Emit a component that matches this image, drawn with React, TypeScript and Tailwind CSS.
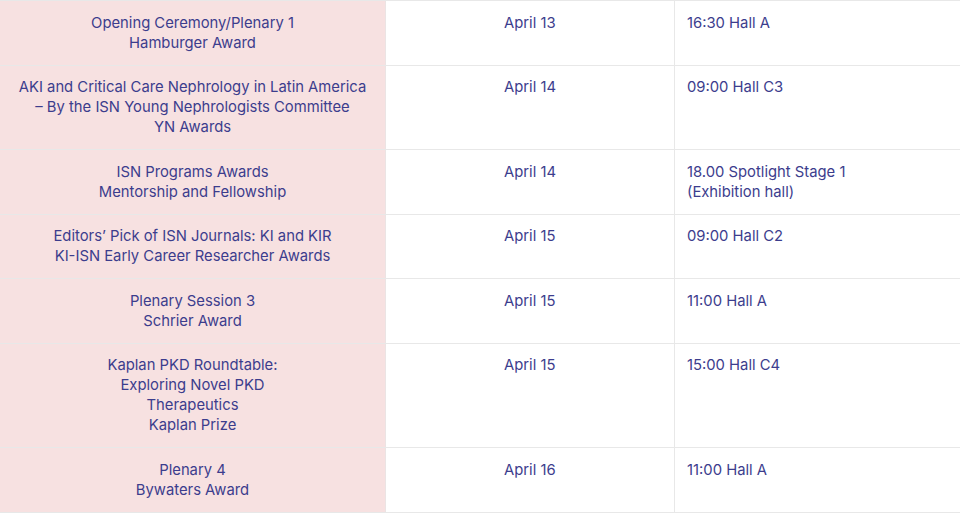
import React from "react";

const rows: { title: string[]; date: string; place: string[] }[] = [
  { title: ["Opening Ceremony/Plenary 1", "Hamburger Award"], date: "April 13", place: ["16:30 Hall A"] },
  {
    title: [
      "AKI and Critical Care Nephrology in Latin America",
      "– By the ISN Young Nephrologists Committee",
      "YN Awards",
    ],
    date: "April 14",
    place: ["09:00 Hall C3"],
  },
  { title: ["ISN Programs Awards", "Mentorship and Fellowship"], date: "April 14", place: ["18.00 Spotlight Stage 1", "(Exhibition hall)"] },
  { title: ["Editors’ Pick of ISN Journals: KI and KIR", "KI-ISN Early Career Researcher Awards"], date: "April 15", place: ["09:00 Hall C2"] },
  { title: ["Plenary Session 3", "Schrier Award"], date: "April 15", place: ["11:00 Hall A"] },
  {
    title: ["Kaplan PKD Roundtable:", "Exploring Novel PKD", "Therapeutics", "Kaplan Prize"],
    date: "April 15",
    place: ["15:00 Hall C4"],
  },
  { title: ["Plenary 4", "Bywaters Award"], date: "April 16", place: ["11:00 Hall A"] },
];

export default function App() {
  return (
    <div
      className="w-[960px] h-[513px] bg-white overflow-hidden text-[14.8px] leading-5 text-[#3c3d8d]"
      style={{ fontFamily: "Inter, 'Noto Sans', sans-serif" }}
    >
      <div className="border-t border-[#e8e8e8]">
        {rows.map((r, i) => (
          <div key={i} className="grid grid-cols-[386px_289px_1fr] border-b border-[#e8e8e8]">
            <div className="bg-[#f7e1e1] text-center py-[11.75px] border-r border-[#ebe4e4]">
              {r.title.map((t, j) => (
                <div key={j}>{t}</div>
              ))}
            </div>
            <div className="py-[11.75px] pl-[118px] border-r border-[#e8e8e8]">{r.date}</div>
            <div className="py-[11.75px] pl-[12px]">
              {r.place.map((t, j) => (
                <div key={j}>{t}</div>
              ))}
            </div>
          </div>
        ))}
      </div>
    </div>
  );
}
